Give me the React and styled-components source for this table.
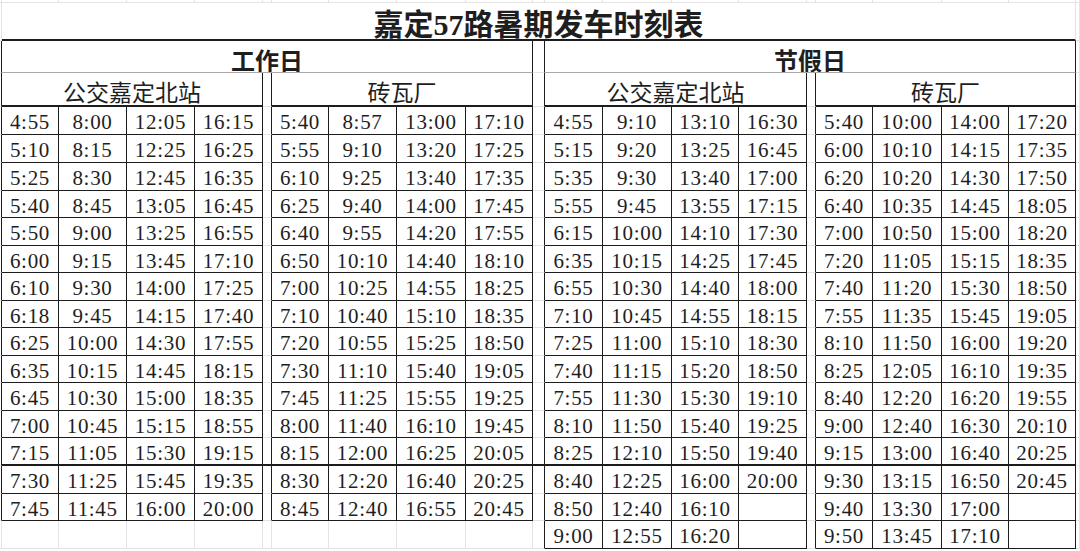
import React from 'react';
import styled, { createGlobalStyle } from 'styled-components';

const COLS = [2, 57, 68, 68, 68, 9, 57, 68, 69, 67, 12, 58, 69, 67, 68, 9, 57, 69, 67, 67, 4];
const ROWS = [3, 38, 32, 34, 28, 28, 28, 27, 28, 27, 28, 27, 28, 27, 28, 27, 28, 28, 27, 28, 2];

const LINE = {
    grid: '1px solid #e4e4e4',
    black: '1px solid #1c1c1c',
    thick: '2px solid #1c1c1c',
    gray: '1px solid #a9a9a9',
};

const TABLES = [
    {
        rows: 15,
        cols: [
            ['4:55', '5:10', '5:25', '5:40', '5:50', '6:00', '6:10', '6:18', '6:25', '6:35', '6:45', '7:00', '7:15', '7:30', '7:45'],
            ['8:00', '8:15', '8:30', '8:45', '9:00', '9:15', '9:30', '9:45', '10:00', '10:15', '10:30', '10:45', '11:05', '11:25', '11:45'],
            ['12:05', '12:25', '12:45', '13:05', '13:25', '13:45', '14:00', '14:15', '14:30', '14:45', '15:00', '15:15', '15:30', '15:45', '16:00'],
            ['16:15', '16:25', '16:35', '16:45', '16:55', '17:10', '17:25', '17:40', '17:55', '18:15', '18:35', '18:55', '19:15', '19:35', '20:00'],
        ],
    },
    {
        rows: 15,
        cols: [
            ['5:40', '5:55', '6:10', '6:25', '6:40', '6:50', '7:00', '7:10', '7:20', '7:30', '7:45', '8:00', '8:15', '8:30', '8:45'],
            ['8:57', '9:10', '9:25', '9:40', '9:55', '10:10', '10:25', '10:40', '10:55', '11:10', '11:25', '11:40', '12:00', '12:20', '12:40'],
            ['13:00', '13:20', '13:40', '14:00', '14:20', '14:40', '14:55', '15:10', '15:25', '15:40', '15:55', '16:10', '16:25', '16:40', '16:55'],
            ['17:10', '17:25', '17:35', '17:45', '17:55', '18:10', '18:25', '18:35', '18:50', '19:05', '19:25', '19:45', '20:05', '20:25', '20:45'],
        ],
    },
    {
        rows: 16,
        cols: [
            ['4:55', '5:15', '5:35', '5:55', '6:15', '6:35', '6:55', '7:10', '7:25', '7:40', '7:55', '8:10', '8:25', '8:40', '8:50', '9:00'],
            ['9:10', '9:20', '9:30', '9:45', '10:00', '10:15', '10:30', '10:45', '11:00', '11:15', '11:30', '11:50', '12:10', '12:25', '12:40', '12:55'],
            ['13:10', '13:25', '13:40', '13:55', '14:10', '14:25', '14:40', '14:55', '15:10', '15:20', '15:30', '15:40', '15:50', '16:00', '16:10', '16:20'],
            ['16:30', '16:45', '17:00', '17:15', '17:30', '17:45', '18:00', '18:15', '18:30', '18:50', '19:10', '19:25', '19:40', '20:00', '', ''],
        ],
    },
    {
        rows: 16,
        cols: [
            ['5:40', '6:00', '6:20', '6:40', '7:00', '7:20', '7:40', '7:55', '8:10', '8:25', '8:40', '9:00', '9:15', '9:30', '9:40', '9:50'],
            ['10:00', '10:10', '10:20', '10:35', '10:50', '11:05', '11:20', '11:35', '11:50', '12:05', '12:20', '12:40', '13:00', '13:15', '13:30', '13:45'],
            ['14:00', '14:15', '14:30', '14:45', '15:00', '15:15', '15:30', '15:45', '16:00', '16:10', '16:20', '16:30', '16:40', '16:50', '17:00', '17:10'],
            ['17:20', '17:35', '17:50', '18:05', '18:20', '18:35', '18:50', '19:05', '19:20', '19:35', '19:55', '20:10', '20:25', '20:45', '', ''],
        ],
    },
];

const STATIONS = ['公交嘉定北站', '砖瓦厂', '公交嘉定北站', '砖瓦厂'];

const GlobalStyle = createGlobalStyle`
    html, body {
        margin: 0;
        padding: 0;
        background: #fff;
    }
    #root {
        width: 1080px;
        height: 551px;
        overflow: hidden;
    }
`;

const Sheet = styled.div`
    display: grid;
    grid-template-columns: ${COLS.map(w => `${w}px`).join(' ')};
    grid-template-rows: ${ROWS.map(h => `${h}px`).join(' ')};
    width: 1080px;
    height: 551px;
    background: #fff;
    color: #1e1e1e;
`;

const Cell = styled.div`
    grid-column: span ${p => p.$span || 1};
    box-sizing: border-box;
    min-width: 0;
    border-right: ${p => LINE[p.$r || 'grid']};
    border-bottom: ${p => LINE[p.$b || 'grid']};
    display: flex;
    align-items: center;
    justify-content: center;
    white-space: nowrap;
    overflow: hidden;
`;

const TitleCell = styled(Cell)`
    font-family: "Liberation Serif", "Noto Sans CJK SC", serif;
    font-size: 30px;
    font-weight: 700;
    padding-top: 1px;
`;

const GroupCell = styled(Cell)`
    font-family: "Liberation Serif", "Noto Sans CJK SC", serif;
    font-size: 24px;
    font-weight: 700;
    padding-top: 5px;
`;

const StationCell = styled(Cell)`
    font-family: "Liberation Serif", "Noto Sans CJK SC", serif;
    font-size: 23px;
    padding-top: 4px;
`;

const TimeCell = styled(Cell)`
    font-family: "Liberation Serif", serif;
    font-size: 21px;
    letter-spacing: 0.7px;
    padding-top: 4px;
`;

const TABLE_START = [1, 6, 11, 16];

function topRows() {
    const out = [];
    COLS.forEach((_, i) => out.push(<Cell key={`r0-${i}`} />));

    out.push(<Cell key="t0" />);
    out.push(<TitleCell key="t1" $span={19} $b="thick">嘉定57路暑期发车时刻表</TitleCell>);
    out.push(<Cell key="t2" />);

    out.push(<Cell key="g0" $r="black" />);
    out.push(<GroupCell key="g1" $span={9} $r="black" $b="gray">工作日</GroupCell>);
    out.push(<Cell key="g2" $r="black" />);
    out.push(<GroupCell key="g3" $span={9} $r="black" $b="gray">节假日</GroupCell>);
    out.push(<Cell key="g4" />);

    out.push(<Cell key="s0" $r="black" />);
    STATIONS.forEach((name, t) => {
        out.push(<StationCell key={`s${t}`} $span={4} $r="black" $b="thick">{name}</StationCell>);
        out.push(<Cell key={`sg${t}`} $r={t < 3 ? 'black' : 'grid'} />);
    });
    return out;
}

function dataRows() {
    const out = [];
    for (let r = 0; r < 16; r++) {
        const firstOn = r < TABLES[0].rows;
        out.push(<Cell key={`d${r}-0`} $r={firstOn ? 'black' : 'grid'} />);
        TABLES.forEach((tb, t) => {
            const on = r < tb.rows;
            tb.cols.forEach((col, j) => {
                out.push(
                    <TimeCell
                        key={`d${r}-${TABLE_START[t] + j}`}
                        $r={on ? 'black' : 'grid'}
                        $b={on ? (r === 12 ? 'thick' : 'black') : 'grid'}
                    >
                        {on ? col[r] : ''}
                    </TimeCell>
                );
            });
            const nextOn = t < 3 && r < TABLES[t + 1].rows;
            out.push(
                <Cell
                    key={`d${r}-gap${t}`}
                    $r={nextOn ? 'black' : 'grid'}
                    $b={r === 12 && t < 3 ? 'thick' : 'grid'}
                />
            );
        });
    }
    return out;
}

const App = () => (
    <>
        <GlobalStyle />
        <Sheet>
            {topRows()}
            {dataRows()}
        </Sheet>
    </>
);

export default App;
